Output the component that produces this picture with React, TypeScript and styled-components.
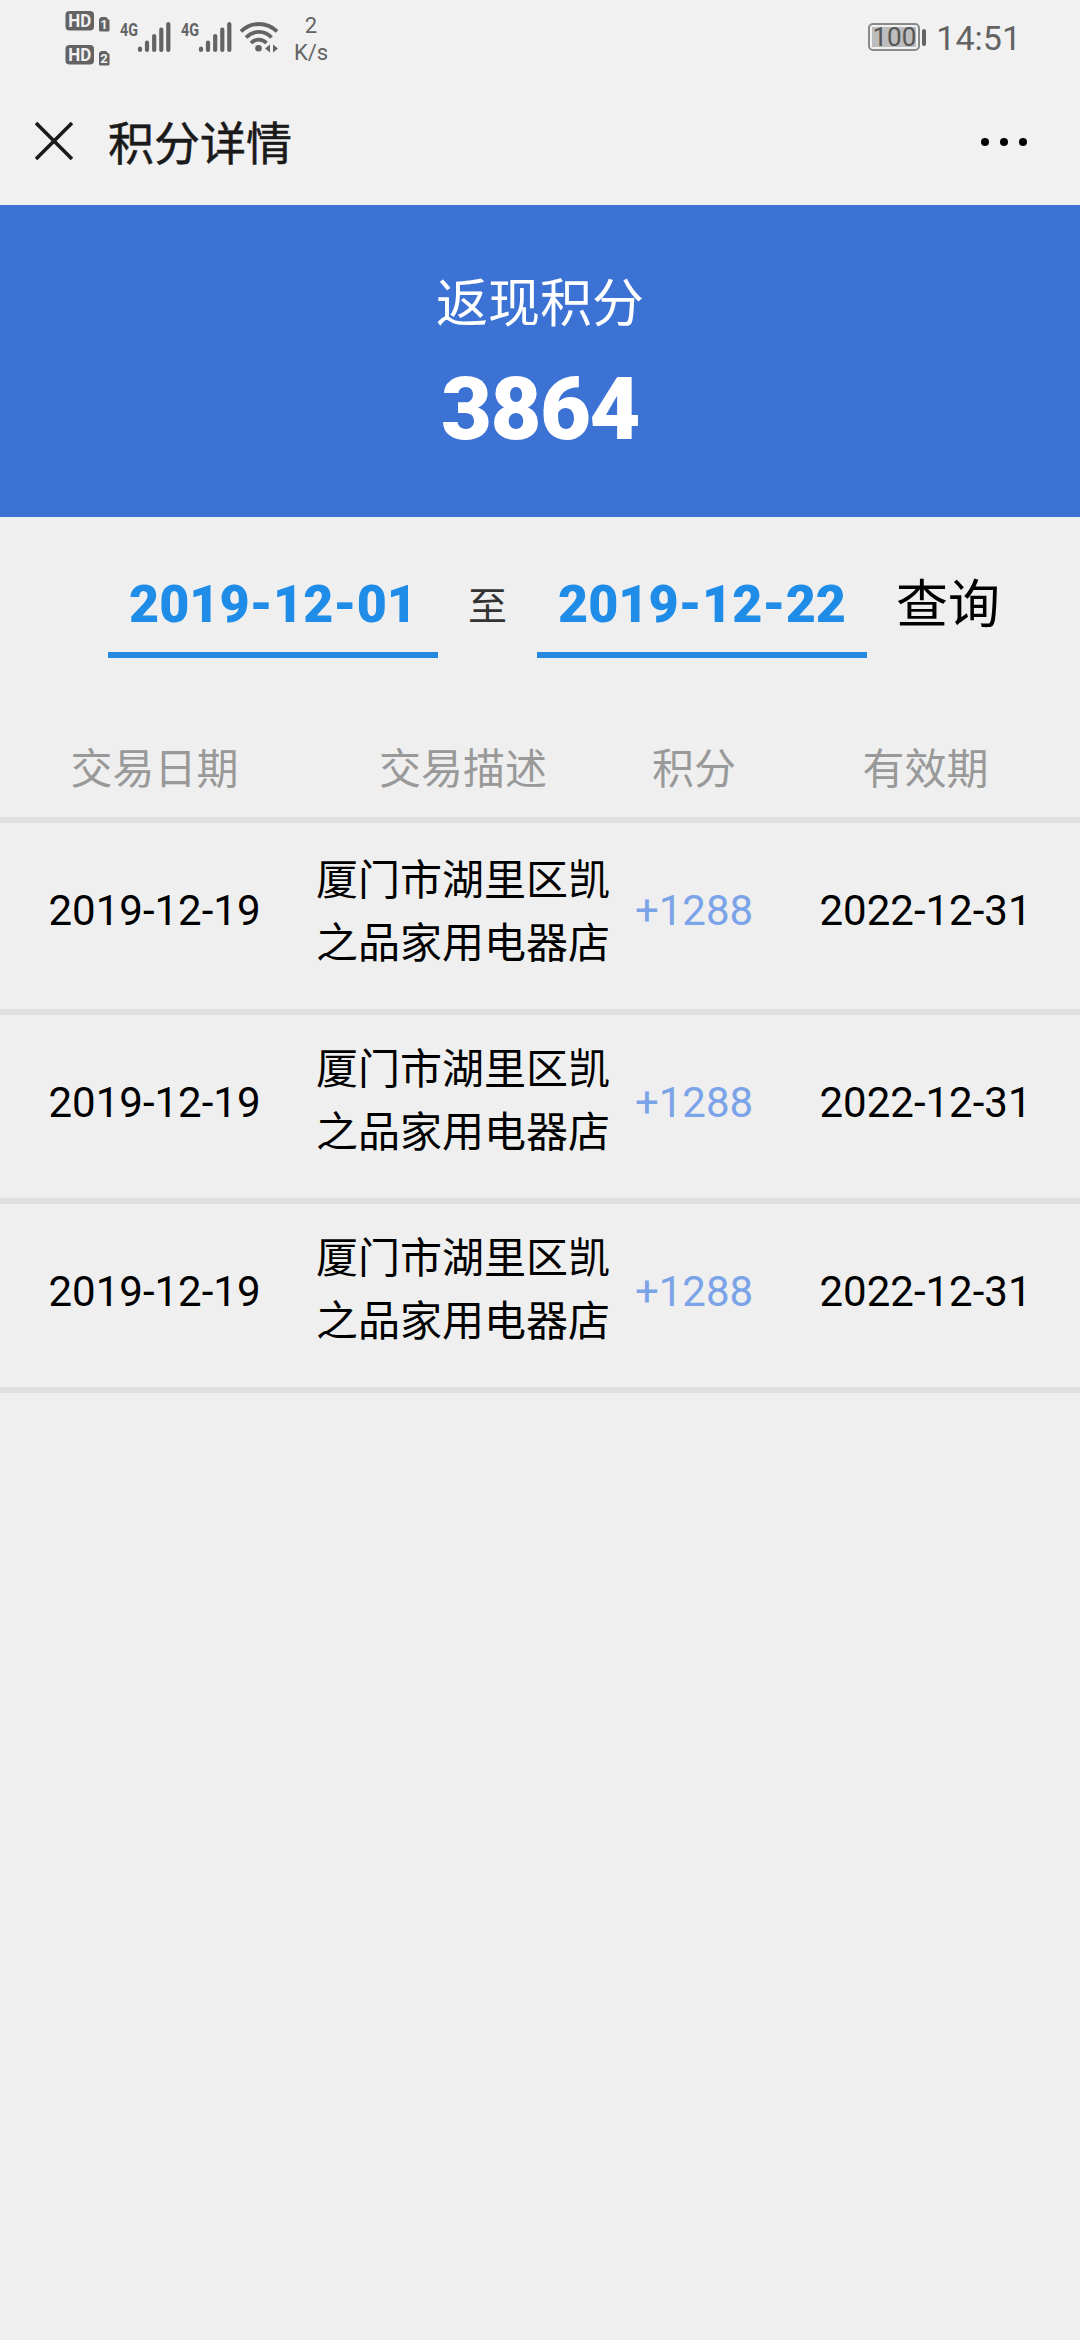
import styled, { createGlobalStyle } from 'styled-components'

const records = [
  { id: 1, date: '2019-12-19', desc: '厦门市湖里区凯之品家用电器店', points: '+1288', expires: '2022-12-31' },
  { id: 2, date: '2019-12-19', desc: '厦门市湖里区凯之品家用电器店', points: '+1288', expires: '2022-12-31' },
  { id: 3, date: '2019-12-19', desc: '厦门市湖里区凯之品家用电器店', points: '+1288', expires: '2022-12-31' },
]

const HdIcon = ({ sim }: { sim: number }) => (
  <svg width="45" height="22" viewBox="0 0 45 22">
    <rect x="0.5" y="1" width="28.5" height="19.5" rx="4" fill="#636363" />
    <text x="3.2" y="17.3" fontFamily="Roboto" fontSize="18" fontWeight="700" fill="#f1f1f1" textLength="23" lengthAdjust="spacingAndGlyphs">HD</text>
    <path d="M36 7h5l3.5 3.5V20a1.5 1.5 0 0 1-1.5 1.5h-7.5A1.5 1.5 0 0 1 34 20V9z" fill="#636363" />
    <text x="39" y="19" textAnchor="middle" fontFamily="Roboto" fontSize="13" fontWeight="700" fill="#f1f1f1">{sim}</text>
  </svg>
)

const SignalIcon = () => (
  <svg width="52" height="38" viewBox="0 -4 52 38">
    <text x="0" y="15.7" fontFamily="Roboto" fontSize="19" fontWeight="700" fill="#636363" textLength="18" lengthAdjust="spacingAndGlyphs">4G</text>
    <path
      d="M20 28.5v1.5M27 22.5v7.5M34.2 16v14M41.3 9.5v20.5M48.3 4v26"
      stroke="#636363"
      strokeWidth="4.2"
      strokeLinecap="round"
    />
  </svg>
)

const WifiIcon = () => (
  <svg width="38" height="34" viewBox="0 0 38 34">
    <g fill="none" stroke="#636363" strokeWidth="3.8">
      <path d="M1 11.5C11 1.5 27 1.5 37 11.5" />
      <path d="M6 17.5C13.5 10 24.5 10 31.5 17.5" />
      <path d="M11 23C15.5 18.5 22 18.5 26.5 23" />
    </g>
    <circle cx="18.5" cy="28.3" r="3.3" fill="#636363" />
    <path d="M25 28.5l5-4v8zM38 28.5l-5-4v8z" fill="#636363" />
  </svg>
)

const App = () => {
  return (
    <Page>
      <GlobalStyle />
      <StatusBar>
        <HdGroup>
          <HdIcon sim={1} />
          <HdIcon sim={2} />
        </HdGroup>
        <Signals>
          <SignalIcon />
          <SignalIcon />
          <WifiIcon />
        </Signals>
        <NetSpeed>
          <span>2</span>
          <span>K/s</span>
        </NetSpeed>
        <Battery>
          <BatteryLevel>100</BatteryLevel>
        </Battery>
        <BatteryTip />
        <Clock>14:51</Clock>
      </StatusBar>
      <TitleBar>
        <svg width="38" height="38" viewBox="0 0 38 38">
          <path d="M1 1L37 37M37 1L1 37" stroke="#1a1a1a" strokeWidth="3.6" />
        </svg>
        <Title>积分详情</Title>
        <MoreButton aria-label="more">
          <Dot />
          <Dot />
          <Dot />
        </MoreButton>
      </TitleBar>
      <Summary>
        <SummaryLabel>返现积分</SummaryLabel>
        <SummaryValue>3864</SummaryValue>
      </Summary>
      <Filter>
        <DateField>2019-12-01</DateField>
        <To>至</To>
        <DateField>2019-12-22</DateField>
        <QueryButton>查询</QueryButton>
      </Filter>
      <HeadRow>
        <span>交易日期</span>
        <span>交易描述</span>
        <span>积分</span>
        <span>有效期</span>
      </HeadRow>
      {records.map((record, index) => (
        <Row key={record.id} $first={index === 0}>
          <Cell>{record.date}</Cell>
          <Desc $first={index === 0}>{record.desc}</Desc>
          <Points>{record.points}</Points>
          <Cell>{record.expires}</Cell>
        </Row>
      ))}
    </Page>
  )
}

const GlobalStyle = createGlobalStyle`
  * {
    box-sizing: border-box;
  }

  body {
    margin: 0;
    background-color: #efefef;
    font-family: Roboto, 'Noto Sans CJK SC', sans-serif;
  }
`

const Page = styled.div`
  width: 1080px;
  min-height: 2340px;
  background-color: #efefef;
`

const StatusBar = styled.div`
  display: flex;
  height: 76px;
  padding: 0 59px 0 65px;
  background-color: #f1f1f1;
  color: #636363;
`

const HdGroup = styled.div`
  display: flex;
  flex-direction: column;
  gap: 12px;
  padding-top: 10px;
`

const Signals = styled.div`
  display: flex;
  align-items: flex-end;
  gap: 9px;
  height: 54px;
  padding-left: 10px;

  & > :last-child {
    margin-left: -2px;
  }
`

const NetSpeed = styled.div`
  display: flex;
  flex-direction: column;
  align-items: center;
  width: 34px;
  margin-left: 16px;
  padding-top: 12px;
  font-size: 22px;
  line-height: 27px;
`

const Battery = styled.div`
  width: 52px;
  height: 28px;
  margin: 23px 0 0 auto;
  padding: 2px;
  border: 2px solid #8a8a8a;
  border-radius: 5px;
`

const BatteryLevel = styled.div`
  display: flex;
  align-items: center;
  justify-content: center;
  height: 20px;
  background-color: #bdbdbd;
  color: #555;
  font-size: 26px;
  line-height: 20px;
`

const BatteryTip = styled.div`
  width: 4px;
  height: 17px;
  margin: 29px 0 0 2px;
  border-radius: 2px;
  background-color: #636363;
`

const Clock = styled.div`
  margin-left: 10px;
  padding-top: 18px;
  font-size: 34px;
  line-height: 40px;
`

const TitleBar = styled.header`
  display: flex;
  align-items: center;
  height: 129px;
  padding: 0 53px 0 35px;
  background-color: #f1f1f1;
`

const Title = styled.h1`
  margin: 0 auto 2px 35px;
  color: #1a1a1a;
  font-size: 46px;
  font-weight: 400;
  -webkit-text-stroke: 0.5px #1a1a1a;
`

const MoreButton = styled.button`
  display: flex;
  gap: 11px;
  padding: 2px 0 0;
  border: none;
  background: none;
`

const Dot = styled.span`
  width: 8px;
  height: 8px;
  border-radius: 50%;
  background-color: #000;
`

const Summary = styled.section`
  display: flex;
  flex-direction: column;
  align-items: center;
  height: 312px;
  padding-top: 62px;
  background-color: #3b72d4;
  color: #fff;
`

const SummaryLabel = styled.div`
  font-size: 52px;
  line-height: 76px;
`

const SummaryValue = styled.div`
  margin-top: 14px;
  font-size: 88px;
  font-weight: 900;
  letter-spacing: -1.5px;
  line-height: 104px;
`

const Filter = styled.div`
  display: flex;
  height: 192px;
  padding: 42px 0 0 108px;
`

const DateField = styled.div`
  width: 330px;
  height: 99px;
  border-bottom: 6px solid #2589e0;
  color: #1f8ce8;
  font-size: 52px;
  font-weight: 900;
  line-height: 92px;
  text-align: center;
`

const To = styled.span`
  width: 99px;
  color: #333;
  font-size: 39px;
  line-height: 97px;
  text-align: center;
`

const QueryButton = styled.button`
  height: 83px;
  margin-left: 29px;
  padding: 0;
  border: none;
  background: none;
  color: #000;
  font-family: inherit;
  font-size: 52px;
`

const HeadRow = styled.div`
  display: grid;
  grid-template-columns: 309px 308px 154px 309px;
  align-items: center;
  height: 114px;
  padding-top: 4px;
  border-bottom: 6px solid #e0e0e0;
  color: #999;
  font-size: 42px;
  text-align: center;
`

const Row = styled.div<{ $first: boolean }>`
  display: grid;
  grid-template-columns: 309px 308px 154px 309px;
  align-items: start;
  height: ${({ $first }) => ($first ? '192px' : '189px')};
  border-bottom: 6px solid #e0e0e0;
  color: #000;
  font-size: 42px;
  text-align: center;
`

const Cell = styled.span`
  padding-top: 25px;
  line-height: 126px;
`

const Desc = styled.span<{ $first: boolean }>`
  padding: ${({ $first }) => ($first ? '26px' : '23px')} 7px 0;
  line-height: 63px;
`

const Points = styled(Cell)`
  color: #7ba3e8;
`

export default App
